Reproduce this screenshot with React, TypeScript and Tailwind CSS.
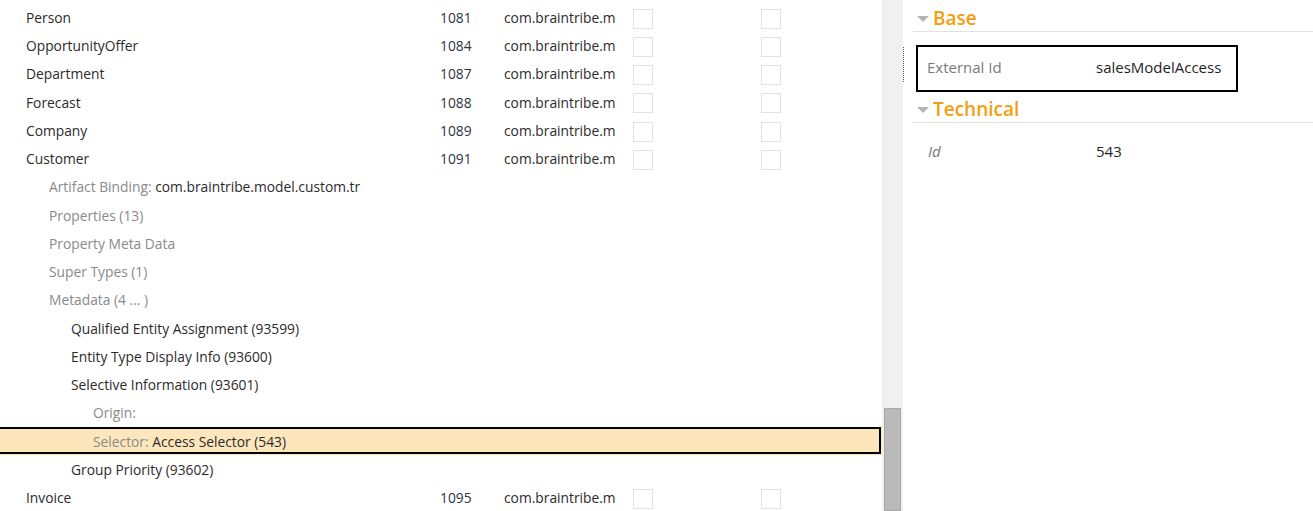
import React from 'react';

type EntityRow = { kind: 'entity'; name: string; id: string; pkg: string };
type TreeRow = { kind: 'tree'; level: 1 | 2 | 3; label?: string; value?: string; selected?: boolean };
type Row = EntityRow | TreeRow;

const rows: Row[] = [
  { kind: 'entity', name: 'Person', id: '1081', pkg: 'com.braintribe.model' },
  { kind: 'entity', name: 'OpportunityOffer', id: '1084', pkg: 'com.braintribe.model' },
  { kind: 'entity', name: 'Department', id: '1087', pkg: 'com.braintribe.model' },
  { kind: 'entity', name: 'Forecast', id: '1088', pkg: 'com.braintribe.model' },
  { kind: 'entity', name: 'Company', id: '1089', pkg: 'com.braintribe.model' },
  { kind: 'entity', name: 'Customer', id: '1091', pkg: 'com.braintribe.model' },
  { kind: 'tree', level: 1, label: 'Artifact Binding:', value: 'com.braintribe.model.custom.tr' },
  { kind: 'tree', level: 1, label: 'Properties (13)' },
  { kind: 'tree', level: 1, label: 'Property Meta Data' },
  { kind: 'tree', level: 1, label: 'Super Types (1)' },
  { kind: 'tree', level: 1, label: 'Metadata (4 ... )' },
  { kind: 'tree', level: 2, value: 'Qualified Entity Assignment (93599)' },
  { kind: 'tree', level: 2, value: 'Entity Type Display Info (93600)' },
  { kind: 'tree', level: 2, value: 'Selective Information (93601)' },
  { kind: 'tree', level: 3, label: 'Origin:' },
  { kind: 'tree', level: 3, label: 'Selector:', value: 'Access Selector (543)', selected: true },
  { kind: 'tree', level: 2, value: 'Group Priority (93602)' },
  { kind: 'entity', name: 'Invoice', id: '1095', pkg: 'com.braintribe.model' },
];

const indent = { 1: 'pl-[49px]', 2: 'pl-[71px]', 3: 'pl-[93px]' };

const Check = () => (
  <div className="w-[20px] h-[20px] mt-[3px] border border-[#e2e2e2] bg-white shrink-0" />
);

const CheckCells = () => (
  <>
    <div className="ml-[18px]"><Check /></div>
    <div className="ml-[108px]"><Check /></div>
  </>
);

const EntityLine = ({ row }: { row: EntityRow }) => (
  <div className="h-[28.25px] flex items-center pl-[26px] text-[#2b2b2b]">
    <div className="w-[414px] mt-[2px] truncate">{row.name}</div>
    <div className="w-[64px] mt-[2px] text-[#2e3440]">{row.id}</div>
    <div className="w-[111px] mt-[2px] overflow-hidden whitespace-nowrap">{row.pkg}</div>
    <CheckCells />
  </div>
);

const TreeLine = ({ row }: { row: TreeRow }) => (
  <div className={`relative h-[28.25px] flex items-center ${indent[row.level]} ${row.selected ? 'bg-[#fee6bc]' : ''}`}>
    {row.selected && (
      <div className="absolute left-[-2px] right-[1px] top-0 h-[27px] border-2 border-black pointer-events-none" />
    )}
    <span className="whitespace-nowrap mt-[2px]">
      {row.label && <span className="text-[#8a8a8a]">{row.label}</span>}
      {row.label && row.value && ' '}
      {row.value && <span className="text-[#2b2b2b]">{row.value}</span>}
    </span>
  </div>
);

const SectionHeader = ({ title, className }: { title: string; className: string }) => (
  <div className={`flex items-center border-b border-[#e2e2e2] ${className}`}>
    <svg width="12" height="6" viewBox="0 0 12 6" className="ml-[4px] mr-[4px] mt-[1px]">
      <polygon points="0,0 12,0 6,6" fill="#b5b5b5" />
    </svg>
    <span className="text-[19px] font-semibold text-[#f59d0e] leading-none">{title}</span>
  </div>
);

export default function App() {
  return (
    <div className="flex w-[1313px] h-[511px] overflow-hidden bg-white text-[13.8px] font-['Open_Sans',sans-serif]">
      {/* list */}
      <div className="w-[882px] shrink-0 overflow-hidden">
        <div className="-mt-[25.25px]">
          <div className="h-[28.25px] flex items-center pl-[26px]">
            <div className="w-[589px]" />
            <CheckCells />
          </div>
          {rows.map((r, i) =>
            r.kind === 'entity' ? <EntityLine key={i} row={r} /> : <TreeLine key={i} row={r} />
          )}
        </div>
      </div>

      {/* scrollbar */}
      <div className="w-[21px] shrink-0 bg-[#f0f0f0] flex flex-col pt-[408px]">
        <div className="flex-1 mx-[2px] bg-[#bababa] border border-[#a8a8a8]" />
      </div>

      {/* splitter */}
      <div className="w-[10px] shrink-0">
        <div className="mt-[47px] h-[35px] border-l border-dotted border-[#555]" />
      </div>

      {/* property panel */}
      <div className="flex-1 flex flex-col text-[15px]">
        <SectionHeader title="Base" className="h-[32px] pt-[6px]" />
        <div className="mt-[13px] ml-[3px] w-[322px] h-[47px] border-2 border-black flex items-center pb-[3px] pl-[9px]">
          <div className="w-[169px] text-[#7a7a7a]">External Id</div>
          <div className="text-[#1f1f1f]">salesModelAccess</div>
        </div>
        <SectionHeader title="Technical" className="h-[31px] pt-[4px]" />
        <div className="mt-[14px] h-[28px] flex items-center pl-[15px]">
          <div className="w-[168px] italic text-[#7a7a7a]">Id</div>
          <div className="text-[#1f1f1f]">543</div>
        </div>
      </div>
    </div>
  );
}
